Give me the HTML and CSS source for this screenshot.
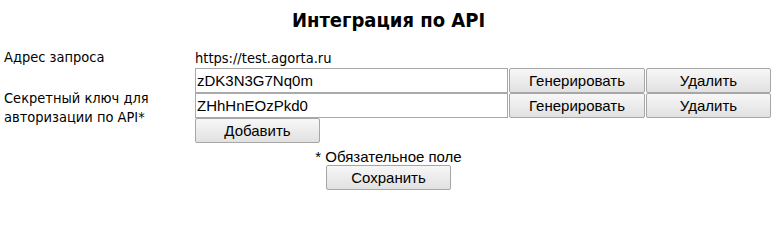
FILE: index.html
```html
<!DOCTYPE html>
<html lang="ru">
<head>
<meta charset="utf-8">
<title>Интеграция по API</title>
<link rel="stylesheet" href="styles.css">
</head>
<body>
<div class="page">
  <h1 class="title">Интеграция по API</h1>
  <div class="form">
    <div class="label label-addr">Адрес запроса</div>
    <div class="value value-addr">https://test.agorta.ru</div>
    <div class="label label-key">Секретный ключ для<br>авторизации по API*</div>
    <input class="field r2" type="text" value="zDK3N3G7Nq0m">
    <button class="btn btn-gen r2" type="button">Генерировать</button>
    <button class="btn btn-del r2" type="button">Удалить</button>
    <input class="field r3" type="text" value="ZHhHnEOzPkd0">
    <button class="btn btn-gen r3" type="button">Генерировать</button>
    <button class="btn btn-del r3" type="button">Удалить</button>
    <button class="btn btn-add" type="button">Добавить</button>
  </div>
  <div class="footer">
    <div class="note">* Обязательное поле</div>
    <button class="btn btn-save" type="button">Сохранить</button>
  </div>
</div>
</body>
</html>
```
FILE: styles.css
```css
html, body {
  margin: 0;
  padding: 0;
  background: #ffffff;
}
.page {
  width: 777px;
  padding: 9px 0 0 0;
  color: #000000;
  font-family: "DejaVu Sans Condensed", "DejaVu Sans", sans-serif;
  font-size: 14.5px;
}
.title {
  margin: 0 0 16px 0;
  text-align: center;
  font-family: "DejaVu Sans Condensed", "DejaVu Sans", sans-serif;
  font-weight: bold;
  font-size: 20px;
  line-height: 22px;
}
.form {
  display: grid;
  grid-template-columns: 190px 313px 136px 125px;
  grid-template-rows: 21px 25px 25px 25px;
  column-gap: 1px;
  padding-left: 4px;
}
.label {
  grid-column: 1;
  display: flex;
  align-items: center;
  line-height: 19px;
}
.label-addr { grid-row: 1; }
.label-key { grid-row: 2 / 5; padding-top: 4px; }
.value-addr {
  grid-column: 2 / 5;
  grid-row: 1;
  display: flex;
  align-items: center;
}
.field {
  grid-column: 2;
  box-sizing: border-box;
  width: 313px;
  height: 25px;
  margin: 0;
  padding: 0 1px;
  border: 1px solid #a9a9a9;
  font-family: "Liberation Sans", Arial, sans-serif;
  font-size: 15px;
  color: #000;
  background: #fff;
  outline: none;
}
.r2 { grid-row: 2; }
.r3 { grid-row: 3; }
.btn {
  box-sizing: border-box;
  margin: 0;
  padding: 0;
  height: 24px;
  border: 1px solid #a6a6a6;
  border-radius: 2px;
  background: linear-gradient(#f7f7f7, #ececec 50%, #e1e1e1);
  font-family: "Liberation Sans", Arial, sans-serif;
  font-size: 15px;
  color: #000;
  cursor: pointer;
}
.btn-gen { grid-column: 3; align-self: start; height: 25px; }
.btn-del { grid-column: 4; align-self: start; height: 25px; }
.btn-add {
  grid-column: 2;
  grid-row: 4;
  width: 125px;
  height: 25px;
}
.footer {
  display: flex;
  flex-direction: column;
  align-items: center;
  padding-top: 5px;
}
.note {
  font-family: "Liberation Sans", Arial, sans-serif;
  font-size: 15px;
  line-height: 17px;
}
.btn-save {
  width: 125px;
  height: 25px;
}
```
